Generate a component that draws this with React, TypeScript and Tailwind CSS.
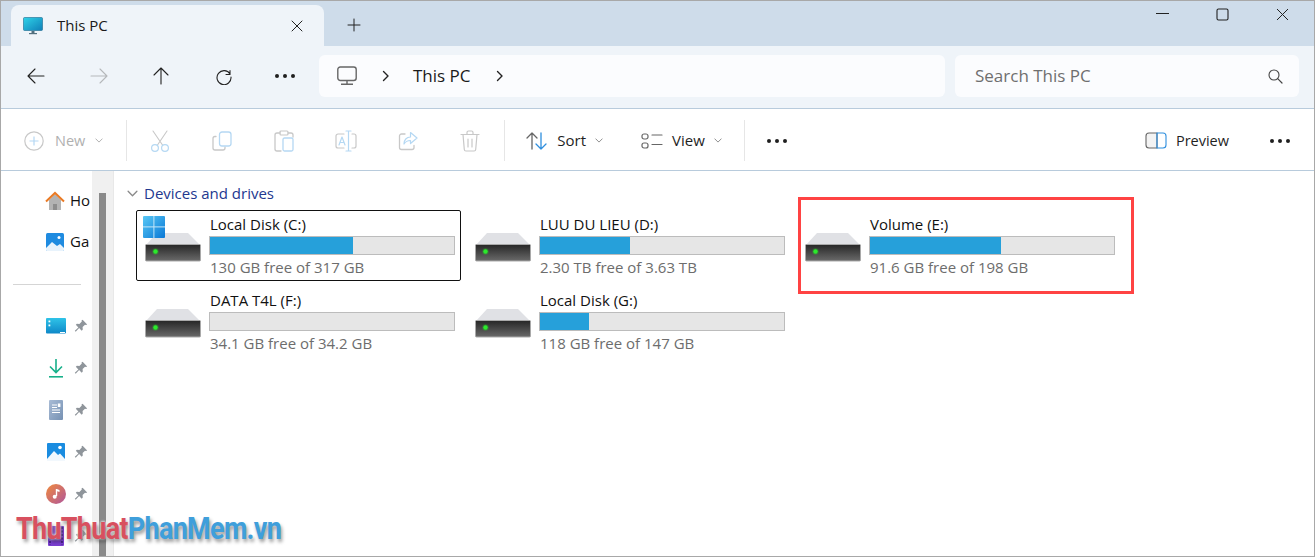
import React from "react";

const FONT = "font-['Open_Sans','Noto_Sans',sans-serif]";

function Stroke({ children, w = 20, h = 20, vb = "0 0 20 20", cls = "" }: { children: React.ReactNode; w?: number; h?: number; vb?: string; cls?: string }) {
  return (
    <svg width={w} height={h} viewBox={vb} fill="none" strokeLinecap="round" strokeLinejoin="round" className={cls}>
      {children}
    </svg>
  );
}

function Dots({ c = "#1f1f1f" }: { c?: string }) {
  return (
    <svg width="22" height="6" viewBox="0 0 22 6">
      <circle cx="3" cy="3" r="2" fill={c} />
      <circle cx="11" cy="3" r="2" fill={c} />
      <circle cx="19" cy="3" r="2" fill={c} />
    </svg>
  );
}

function Chevron({ c = "#8a8a8a", w = 8, h = 5 }: { c?: string; w?: number; h?: number }) {
  return (
    <Stroke w={w} h={h} vb="0 0 10 6">
      <path d="M1 1l4 4 4-4" stroke={c} strokeWidth="1.2" />
    </Stroke>
  );
}

function Crumb() {
  return (
    <Stroke w={8} h={12} vb="0 0 8 12">
      <path d="M1.5 1.5L6 6l-4.5 4.5" stroke="#222" strokeWidth="1.4" />
    </Stroke>
  );
}

function DriveIcon() {
  return (
    <svg width="56" height="30" viewBox="0 0 56 30">
      <defs>
        <linearGradient id="dbody" x1="0" y1="0" x2="0" y2="1">
          <stop offset="0" stopColor="#262626" />
          <stop offset="1" stopColor="#6a6a6a" />
        </linearGradient>
      </defs>
      <path d="M12 1h31l12 12H1z" fill="#e0e1e5" />
      <rect x="0.5" y="12.5" width="55" height="16.5" rx="1" fill="url(#dbody)" stroke="#a9a9a9" strokeWidth="1" />
      <circle cx="10.5" cy="19.5" r="3.2" fill="#22dd22" opacity="0.3" />
      <circle cx="10.5" cy="19.5" r="2.2" fill="#2bea2b" />
    </svg>
  );
}

function WinLogo() {
  return (
    <svg width="22" height="22" viewBox="0 0 22 22" className="absolute left-[6px] top-[5px]">
      <defs>
        <linearGradient id="wl" x1="0" y1="0" x2="1" y2="1">
          <stop offset="0" stopColor="#58c8f5" />
          <stop offset="1" stopColor="#0a78d6" />
        </linearGradient>
      </defs>
      <rect width="22" height="22" rx="1" fill="url(#wl)" />
      <path d="M10.9 0v22M0 10.9h22" stroke="#c4e6f8" strokeWidth="1" />
    </svg>
  );
}

type Drive = { name: string; free: string; pct: number; selected?: boolean; win?: boolean };

function DriveTile({ d }: { d: Drive }) {
  return (
    <div className={`relative flex h-[71px] w-[325px] items-start rounded-[2px] border pl-[8px] ${d.selected ? "border-[#111]" : "border-transparent"}`}>
      {d.win && <WinLogo />}
      <div className="mt-[21px] w-[56px] shrink-0 leading-[0]">
        <DriveIcon />
      </div>
      <div className="ml-[8px] flex w-[246px] flex-col">
        <div className="mt-[1px] h-[24px] pl-[1px] text-[15px] leading-[25px] text-[#111]">{d.name}</div>
        <div className="h-[19px] border border-[#bcbcbc] bg-[#e6e6e6]">
          <div className="h-full bg-[#26a0da]" style={{ width: `${d.pct}%` }} />
        </div>
        <div className="pl-[1px] text-[15px] leading-[24px] text-[#6d6d6d]">{d.free}</div>
      </div>
    </div>
  );
}

function Pin() {
  return (
    <svg width="14" height="14" viewBox="0 0 14 14">
      <path d="M8.6 0.8l4.6 4.6-1.2.6-1 -.3-2.4 2.4.2 2.5-1.1 1.1-2.6-2.6-3.4 3.6-.9-.9 3.6-3.4L1.8 5.8l1.1-1.1 2.5.2 2.4-2.4-.3-1z" fill="#8f959b" />
    </svg>
  );
}

function QuickItem({ icon }: { icon: React.ReactNode }) {
  return (
    <div className="flex h-[42px] items-center pl-[45px]">
      <div className="flex h-[20px] w-[20px] items-center justify-center">{icon}</div>
      <div className="ml-[8px]">
        <Pin />
      </div>
    </div>
  );
}

const drives: Drive[] = [
  { name: "Local Disk (C:)", free: "130 GB free of 317 GB", pct: 58.6, selected: true, win: true },
  { name: "LUU DU LIEU (D:)", free: "2.30 TB free of 3.63 TB", pct: 37 },
  { name: "Volume (E:)", free: "91.6 GB free of 198 GB", pct: 53.5 },
  { name: "DATA T4L (F:)", free: "34.1 GB free of 34.2 GB", pct: 0 },
  { name: "Local Disk (G:)", free: "118 GB free of 147 GB", pct: 20 },
];

export default function App() {
  const faint = "#c8c8c8";
  const blue = "#b5d8f3";
  return (
    <div className={`${FONT} relative flex h-[557px] w-[1315px] flex-col overflow-hidden border border-[#a8a8a8] bg-white`}>
      {/* Tab strip */}
      <div className="flex h-[45px] shrink-0 items-end bg-[#cedcea]">
        <div className="ml-[10px] flex h-[41px] w-[313px] items-center rounded-t-[8px] bg-[#eff4f9] pl-[12px] pr-[21px]">
          <svg width="20" height="18" viewBox="0 0 20 18">
            <defs>
              <linearGradient id="mon" x1="0" y1="0" x2="1" y2="1">
                <stop offset="0" stopColor="#2fd3e8" />
                <stop offset="1" stopColor="#0f7fb8" />
              </linearGradient>
            </defs>
            <rect x="0.5" y="0.5" width="19" height="13" rx="1" fill="url(#mon)" stroke="#1b6a8e" strokeWidth="0.6" />
            <rect x="8.5" y="14" width="3" height="2" fill="#53707f" />
            <rect x="6" y="16" width="8" height="1.2" fill="#53707f" />
          </svg>
          <span className="ml-[14px] flex-1 text-[15px] text-[#1a1a1a]">This PC</span>
          <Stroke w={12} h={12} vb="0 0 12 12">
            <path d="M1 1l10 10M11 1L1 11" stroke="#222" strokeWidth="1" />
          </Stroke>
        </div>
        <div className="mb-[14px] ml-[23px]">
          <Stroke w={14} h={14} vb="0 0 14 14">
            <path d="M7 1v12M1 7h12" stroke="#222" strokeWidth="1" />
          </Stroke>
        </div>
        <div className="ml-auto flex h-full items-start pt-[7px] pr-[25px]">
          <svg width="13" height="12" viewBox="0 0 13 12" className="mr-[47px]">
            <path d="M0 5.5h13" stroke="#222" strokeWidth="1" />
          </svg>
          <svg width="13" height="13" viewBox="0 0 13 13" className="mr-[47px]">
            <rect x="1" y="1" width="11" height="11" rx="1.5" fill="none" stroke="#222" strokeWidth="1.1" />
          </svg>
          <svg width="13" height="13" viewBox="0 0 13 13">
            <path d="M1 1l11 11M12 1L1 12" stroke="#222" strokeWidth="1" />
          </svg>
        </div>
      </div>

      {/* Nav bar */}
      <div className="flex h-[63px] shrink-0 items-center border-b border-[#b8cbdc] bg-[#eff4f9] pb-[2px]">
        <div className="ml-[26px] flex h-[18px] w-[18px] items-center">
          <Stroke w={18} h={16} vb="0 0 18 16">
            <path d="M1 8h16M8 1L1 8l7 7" stroke="#222" strokeWidth="1.1" />
          </Stroke>
        </div>
        <div className="ml-[45px] flex h-[18px] w-[18px] items-center">
          <Stroke w={18} h={16} vb="0 0 18 16">
            <path d="M1 8h16M10 1l7 7-7 7" stroke="#b5b8bb" strokeWidth="1.1" />
          </Stroke>
        </div>
        <div className="ml-[44px] flex h-[18px] w-[18px] items-center justify-center">
          <Stroke w={16} h={18} vb="0 0 16 18">
            <path d="M8 17V1M1 8l7-7 7 7" stroke="#222" strokeWidth="1.1" />
          </Stroke>
        </div>
        <div className="ml-[45px] flex h-[18px] w-[18px] items-center justify-center">
          <Stroke w={18} h={18} vb="0 0 18 18">
            <path d="M15 3.5v4h-4M15 7A7 7 0 1 0 16 10" stroke="#222" strokeWidth="1.1" />
          </Stroke>
        </div>
        <div className="ml-[41px]">
          <Dots />
        </div>
        <div className="ml-[23px] flex h-[42px] w-[626px] items-center rounded-[6px] bg-[#fbfcfe] pl-[18px]">
          <svg width="20" height="20" viewBox="0 0 20 20">
            <rect x="0.8" y="1" width="18.4" height="13.5" rx="2.5" fill="none" stroke="#666" strokeWidth="1.4" />
            <path d="M10 14.5v3M4 18.3h12" stroke="#666" strokeWidth="1.4" />
          </svg>
          <div className="ml-[25px]"><Crumb /></div>
          <span className="ml-[23px] text-[17px] text-[#1a1a1a]">This PC</span>
          <div className="ml-[25px]"><Crumb /></div>
        </div>
        <div className="ml-[10px] flex h-[42px] w-[344px] items-center justify-between rounded-[6px] bg-[#fbfcfe] pl-[20px] pr-[16px]">
          <span className="text-[17px] text-[#6f6f6f]">Search This PC</span>
          <svg width="15" height="15" viewBox="0 0 15 15" fill="none">
            <circle cx="6" cy="6" r="5" stroke="#444" strokeWidth="1.1" />
            <path d="M9.7 9.7L14 14" stroke="#444" strokeWidth="1.2" strokeLinecap="round" />
          </svg>
        </div>
      </div>

      {/* Command bar */}
      <div className="flex h-[62px] shrink-0 items-center border-b border-[#b8cbdc] pt-[2px]">
        <div className="ml-[23px] flex items-center">
          <svg width="20" height="20" viewBox="0 0 20 20" fill="none">
            <circle cx="10" cy="10" r="9.2" stroke={faint} strokeWidth="1.2" />
            <path d="M10 5.5v9M5.5 10h9" stroke={blue} strokeWidth="1.2" />
          </svg>
          <span className="ml-[11px] text-[14.5px] text-[#b0b0b0]">New</span>
          <span className="ml-[10px] flex"><Chevron c="#b0b0b0" /></span>
        </div>
        <div className="ml-[23px] h-[41px] w-px bg-[#e6e6e6]" />
        <div className="ml-[23px] flex w-[20px] justify-center">
          <Stroke w={20} h={22} vb="0 0 20 22">
            <path d="M3 1l9.5 14M17 1L7.5 15" stroke={faint} strokeWidth="1.1" />
            <circle cx="5" cy="18" r="3.4" stroke={blue} strokeWidth="1.2" />
            <circle cx="15" cy="18" r="3.4" stroke={blue} strokeWidth="1.2" />
          </Stroke>
        </div>
        <div className="ml-[42px] flex">
          <Stroke w={20} h={20} vb="0 0 20 20">
            <path d="M4 5.5H3A2 2 0 0 0 1 7.5v9.5a2 2 0 0 0 2 2h8a2 2 0 0 0 2-2v-1" stroke={faint} strokeWidth="1.3" />
            <rect x="7.5" y="1" width="11.5" height="14" rx="2.5" stroke={blue} strokeWidth="1.3" />
          </Stroke>
        </div>
        <div className="ml-[42px] flex">
          <Stroke w={20} h={22} vb="0 0 20 22">
            <path d="M6 3H3a2 2 0 0 0-2 2v14a2 2 0 0 0 2 2h4M14 3h3a2 2 0 0 1 2 2v2" stroke={faint} strokeWidth="1.3" />
            <rect x="6" y="1" width="8" height="4" rx="1" stroke={faint} strokeWidth="1.2" />
            <rect x="9" y="8" width="10" height="13" rx="1.5" stroke={blue} strokeWidth="1.3" />
          </Stroke>
        </div>
        <div className="ml-[41px] flex">
          <Stroke w={22} h={22} vb="0 0 22 22">
            <path d="M9 4H3a2 2 0 0 0-2 2v10a2 2 0 0 0 2 2h6M17 4h2a2 2 0 0 1 2 2v10a2 2 0 0 1-2 2h-2" stroke={faint} strokeWidth="1.2" />
            <path d="M11 1h5M11 21h5M13.5 1v20" stroke={blue} strokeWidth="1.2" />
            <path d="M4 15l3-8 3 8M5 12.5h4" stroke={blue} strokeWidth="1.2" />
          </Stroke>
        </div>
        <div className="ml-[41px] flex">
          <Stroke w={20} h={20} vb="0 0 20 20">
            <path d="M7 3H3.5a2 2 0 0 0-2 2v11.5a2 2 0 0 0 2 2H14a2 2 0 0 0 2-2v-2" stroke={faint} strokeWidth="1.3" />
            <path d="M12.5 1.5L19 7l-6.5 5.5V9.5c-3 0-5 1-6.5 3.5 0-4 2.5-7 6.5-7z" stroke={blue} strokeWidth="1.2" />
          </Stroke>
        </div>
        <div className="ml-[42px] flex">
          <Stroke w={20} h={22} vb="0 0 20 22">
            <path d="M1 4.5h18M7 4.5V2.5a1.5 1.5 0 0 1 1.5-1.5h3A1.5 1.5 0 0 1 13 2.5v2M3 4.5l1.3 15a1.6 1.6 0 0 0 1.6 1.5h8.2a1.6 1.6 0 0 0 1.6-1.5L17 4.5M8 9v8M12 9v8" stroke={faint} strokeWidth="1.2" />
          </Stroke>
        </div>
        <div className="ml-[24px] h-[41px] w-px bg-[#e6e6e6]" />
        <div className="ml-[21px] flex items-center">
          <Stroke w={22} h={18} vb="0 0 22 18">
            <path d="M6 17V1M1 6l5-5 5 5" stroke="#666" strokeWidth="1.3" />
            <path d="M15 1v16M10 12l5 5 5-5" stroke="#2f8fde" strokeWidth="1.3" />
          </Stroke>
          <span className="ml-[9px] text-[15px] text-[#1f1f1f]">Sort</span>
          <span className="ml-[9px] flex"><Chevron /></span>
        </div>
        <div className="ml-[38px] flex items-center">
          <Stroke w={22} h={16} vb="0 0 22 16">
            <rect x="1" y="1" width="6" height="5" rx="2" stroke="#666" strokeWidth="1.2" />
            <rect x="1" y="10" width="6" height="5" rx="2" stroke="#666" strokeWidth="1.2" />
            <path d="M11 2h10M11 11.5h10" stroke="#666" strokeWidth="1.2" />
          </Stroke>
          <span className="ml-[9px] text-[15px] text-[#1f1f1f]">View</span>
          <span className="ml-[9px] flex"><Chevron /></span>
        </div>
        <div className="ml-[22px] h-[41px] w-px bg-[#e6e6e6]" />
        <div className="ml-[21px]"><Dots /></div>
        <div className="ml-auto flex items-center pr-[23px]">
          <svg width="22" height="17" viewBox="0 0 22 17" fill="none">
            <path d="M12 1H4a3 3 0 0 0-3 3v9a3 3 0 0 0 3 3h8z" fill="#f3f3f3" stroke="#666" strokeWidth="1.1" />
            <path d="M12 1h6a3 3 0 0 1 3 3v9a3 3 0 0 1-3 3h-6z" stroke="#2f8fde" strokeWidth="1.1" />
          </svg>
          <span className="ml-[9px] text-[14.5px] text-[#1f1f1f]">Preview</span>
          <div className="ml-[40px]"><Dots /></div>
        </div>
      </div>

      {/* Main */}
      <div className="flex min-h-0 flex-1">
        <aside className="w-[89px] shrink-0 overflow-hidden mr-[2px]">
          <div className="flex h-[41px] mt-[9px] items-center pl-[44px]">
            <svg width="20" height="20" viewBox="0 0 20 20" className="shrink-0">
              <path d="M4 9v10h12V9L10 3z" fill="#b3b3b3" />
              <rect x="8" y="13" width="4" height="6" fill="#8d8d8d" />
              <path d="M1 10.5L10 2l9 8.5" fill="none" stroke="#ea7a24" strokeWidth="2" />
            </svg>
            <span className="ml-[5px] whitespace-nowrap text-[15px] text-[#111]">Home</span>
          </div>
          <div className="flex h-[41px] items-center pl-[44px]">
            <svg width="20" height="20" viewBox="0 0 20 20" className="shrink-0">
              <rect x="1" y="1" width="18" height="18" rx="1.5" fill="#1f8be0" />
              <path d="M1 16l6-6 5 4 3-2 4 4v2a1 1 0 0 1-1 1H2a1 1 0 0 1-1-1z" fill="#e8f3fc" />
              <circle cx="14" cy="5.5" r="1.5" fill="#fff" />
            </svg>
            <span className="ml-[5px] whitespace-nowrap text-[15px] text-[#111]">Gallery</span>
          </div>
          <div className="ml-[12px] mt-[22px] mb-[20px] h-px w-[68px] bg-[#d5d5d5]" />
          <QuickItem
            icon={
              <svg width="20" height="16" viewBox="0 0 20 16">
                <defs>
                  <linearGradient id="desk" x1="0" y1="0" x2="0" y2="1">
                    <stop offset="0" stopColor="#2fc3e8" />
                    <stop offset="1" stopColor="#0e88c8" />
                  </linearGradient>
                </defs>
                <rect width="20" height="15.5" rx="1" fill="url(#desk)" />
                <rect x="2.5" y="2.5" width="1.8" height="1.8" fill="#fff" />
                <rect x="2.5" y="6.5" width="1.8" height="1.8" fill="#fff" />
                <rect x="14" y="14" width="5" height="1" fill="#fff" />
              </svg>
            }
          />
          <QuickItem
            icon={
              <svg width="16" height="20" viewBox="0 0 16 20" fill="none">
                <path d="M8 1v13M2 8.5l6 6 6-6" stroke="#18b08a" strokeWidth="1.6" />
                <path d="M1 18.8h14" stroke="#18b08a" strokeWidth="1.6" />
              </svg>
            }
          />
          <QuickItem
            icon={
              <svg width="14" height="20" viewBox="0 0 14 20">
                <defs>
                  <linearGradient id="docg" x1="0" y1="0" x2="1" y2="1">
                    <stop offset="0" stopColor="#a9bcd6" />
                    <stop offset="1" stopColor="#7691b3" />
                  </linearGradient>
                </defs>
                <rect width="14" height="20" rx="1" fill="url(#docg)" />
                <path d="M3 5h5M3 7.5h5M3 10h8M3 12.5h8" stroke="#fff" strokeWidth="1" />
                <rect x="8.8" y="3.5" width="2.6" height="3.5" fill="#fff" />
              </svg>
            }
          />
          <QuickItem
            icon={
              <svg width="18" height="18" viewBox="0 0 18 18">
                <rect width="18" height="18" rx="1" fill="#1a8ce0" />
                <path d="M0 16l7-8 4 4 2-1.5 5 5.5v2H0z" fill="#f2f8fd" />
                <circle cx="13" cy="4.5" r="1.8" fill="#fff" />
              </svg>
            }
          />
          <QuickItem
            icon={
              <svg width="20" height="20" viewBox="0 0 20 20">
                <defs>
                  <linearGradient id="mus" x1="0" y1="0" x2="1" y2="1">
                    <stop offset="0" stopColor="#f08a3c" />
                    <stop offset="1" stopColor="#b0569c" />
                  </linearGradient>
                </defs>
                <circle cx="10" cy="10" r="10" fill="url(#mus)" />
                <path d="M10.5 5v7" stroke="#fff" strokeWidth="1.4" />
                <path d="M10.5 5l3 1v2l-3-1z" fill="#fff" />
                <circle cx="8.7" cy="12.8" r="2" fill="#fff" />
              </svg>
            }
          />
          <QuickItem
            icon={
              <svg width="16" height="20" viewBox="0 0 16 20">
                <rect width="16" height="20" rx="1" fill="#7a3fd0" />
                <path d="M2 1v18M14 1v18" stroke="#3d1b78" strokeWidth="1.5" strokeDasharray="2 1.5" />
              </svg>
            }
          />
        </aside>

        {/* Sidebar scrollbar */}
        <div className="flex w-[22px] shrink-0 justify-center bg-[#f0f0f0] pt-[22px] border-r border-[#e8e8e8]">
          <div className="h-full w-[7px] bg-[#8a8a8a]" />
        </div>

        {/* Content */}
        <main className="min-w-0 flex-1 pl-[14px]">
          <div className="mt-[12px] flex h-[20px] items-center">
            <span className="-ml-[1px] flex"><Chevron w={11} h={7} /></span>
            <span className="ml-[6px] text-[15px] text-[#22388f]">Devices and drives</span>
          </div>
          <div className="ml-[8px] mt-[7px] grid w-[990px] grid-cols-[repeat(3,330px)] gap-y-[5px]">
            {drives.map((d) => (
              <DriveTile key={d.name} d={d} />
            ))}
          </div>
        </main>
      </div>

      {/* Red annotation */}
      <div className="absolute left-[797px] top-[196px] h-[97px] w-[336px] border-[3px] border-[#ff4343]" />

      {/* Watermark */}
      <div className="absolute left-[15px] top-[509px] origin-left scale-x-[0.87] whitespace-nowrap font-['Roboto',sans-serif] text-[31px] leading-[38px] font-bold tracking-[-0.8px] [text-shadow:2px_3px_4px_rgba(0,0,0,0.4),0_0_3px_#fff,0_0_3px_#fff]">
        <span className="text-[#d8505f]">ThuThuat</span>
        <span className="text-[#3f9fdb]">PhanMem.vn</span>
      </div>
    </div>
  );
}
